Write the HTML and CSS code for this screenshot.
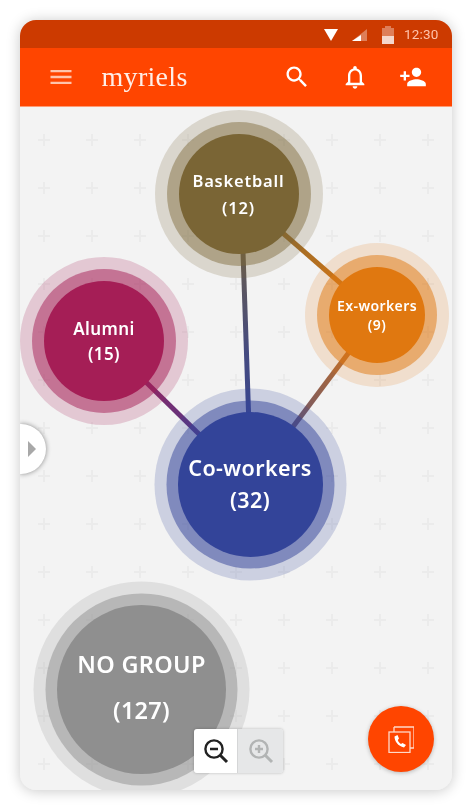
FILE: index.html
```html
<!DOCTYPE html>
<html lang="en">
<head>
<meta charset="utf-8">
<title>myriels</title>
<link rel="stylesheet" href="styles.css">
</head>
<body>
<main class="phone">
  <div class="status">
    <svg class="st-wifi" viewBox="0 0 14 12"><path d="M0 0h14L7 12z"/></svg>
    <svg class="st-signal" viewBox="0 0 15 12"><path class="dim" d="M15 0v12H0z"/><path d="M9 6v6H0z"/></svg>
    <svg class="st-batt" viewBox="0 0 12 18"><path class="dim" d="M3 0h6v2h3v8H0V2h3z"/><path class="mid" d="M0 10h12v8H0z"/></svg>
    <span class="time">12:30</span>
  </div>
  <header class="appbar">
    <svg class="icon menu" viewBox="0 0 24 24"><path d="M3 18h18v-2H3v2zm0-5h18v-2H3v2zm0-7v2h18V6H3z"/></svg>
    <span class="logo">myriels</span>
    <div class="actions">
      <svg class="icon" viewBox="0 0 24 24"><path d="M15.5 14h-.79l-.28-.27C15.41 12.59 16 11.11 16 9.5 16 5.91 13.09 3 9.5 3S3 5.91 3 9.5 5.91 16 9.5 16c1.61 0 3.09-.59 4.23-1.57l.27.28v.79l5 4.99L20.49 19l-4.99-5zm-6 0C7.01 14 5 11.99 5 9.5S7.01 5 9.5 5 14 7.01 14 9.5 11.99 14 9.5 14z"/></svg>
      <svg class="icon" viewBox="0 0 24 24"><path d="M12 22c1.1 0 2-.9 2-2h-4c0 1.1.89 2 2 2zm6-6v-5c0-3.07-1.64-5.64-4.5-6.32V4c0-.83-.67-1.5-1.5-1.5s-1.5.67-1.5 1.5v.68C7.63 5.36 6 7.92 6 11v5l-2 2v1h16v-1l-2-2zm-2 1H8v-6c0-2.48 1.51-4.5 4-4.5s4 2.02 4 4.5v6z"/></svg>
      <svg class="icon" viewBox="0 0 24 24"><path d="M15 12c2.21 0 4-1.79 4-4s-1.79-4-4-4-4 1.79-4 4 1.79 4 4 4zm-9-2V7H4v3H1v2h3v3h2v-3h3v-2H6zm9 4c-2.67 0-8 1.34-8 4v2h16v-2c0-2.66-5.33-4-8-4z"/></svg>
    </div>
  </header>
  <section class="graph">
    <svg class="links" viewBox="0 0 432 684">
      <defs>
        <linearGradient id="g1" gradientUnits="userSpaceOnUse" x1="221" y1="88" x2="231" y2="378"><stop offset="0" stop-color="#7a6535"/><stop offset=".55" stop-color="#444a80"/><stop offset="1" stop-color="#334499"/></linearGradient>
        <linearGradient id="g2" gradientUnits="userSpaceOnUse" x1="218" y1="88" x2="357" y2="209"><stop offset="0" stop-color="#7a6535"/><stop offset="1" stop-color="#e07810"/></linearGradient>
        <linearGradient id="g3" gradientUnits="userSpaceOnUse" x1="357" y1="209" x2="230" y2="378"><stop offset="0" stop-color="#e07810"/><stop offset="1" stop-color="#334499"/></linearGradient>
        <linearGradient id="g4" gradientUnits="userSpaceOnUse" x1="84" y1="235" x2="230" y2="378"><stop offset="0" stop-color="#a51e56"/><stop offset="1" stop-color="#334499"/></linearGradient>
      </defs>
      <line x1="221" y1="88" x2="231" y2="378" stroke="url(#g1)"/>
      <line x1="218" y1="88" x2="357" y2="209" stroke="url(#g2)"/>
      <line x1="357" y1="209" x2="230" y2="378" stroke="url(#g3)"/>
      <line x1="84" y1="235" x2="230" y2="378" stroke="url(#g4)"/>
    </svg>
    <div class="node basketball"><span>Basketball</span><span>(12)</span></div>
    <div class="node exworkers"><span>Ex-workers</span><span>(9)</span></div>
    <div class="node alumni"><span>Alumni</span><span>(15)</span></div>
    <div class="node coworkers"><span>Co-workers</span><span>(32)</span></div>
    <div class="node nogroup"><span>NO GROUP</span><span>(127)</span></div>
    <div class="drawer"><i class="arrow"></i></div>
    <div class="zoom">
      <div class="zoom-btn on">
        <svg viewBox="0 0 26 26"><circle cx="11" cy="11" r="8.6"/><path d="M7 11h8"/><path class="handle" d="M17 17l7 7"/></svg>
      </div>
      <div class="zoom-btn off">
        <svg viewBox="0 0 26 26"><circle cx="11" cy="11" r="8.6"/><path d="M7 11h8M11 7v8"/><path class="handle" d="M17 17l7 7"/></svg>
      </div>
    </div>
    <div class="fab">
      <svg viewBox="0 0 26 27">
        <path d="M6 1h20v21h-4"/><path d="M6 1v5"/>
        <rect x="1" y="6" width="21" height="20.5"/>
        <path class="phone-glyph" d="M6.5 10.500c0 5 3.500 9.500 9.500 11l2-2.500-3.500-2-1.500 1c-1.500-.8-2.800-2.500-3.200-4l1.200-1.500-1.500-3.500z"/>
      </svg>
    </div>
  </section>
</main>
</body>
</html>
```
FILE: styles.css
```css
* { box-sizing: border-box; }
html, body { margin: 0; height: 100%; background: #fff; }
body { padding: 20px; overflow: hidden; font-family: "Noto Sans", sans-serif; }

.phone {
  width: 432px;
  height: 770px;
  border-radius: 16px;
  overflow: hidden;
  display: flex;
  flex-direction: column;
  background: #f3f3f3;
  box-shadow: 0 1px 14px rgba(0, 0, 0, .22);
  filter: blur(.7px);
}

.status {
  height: 28px;
  flex: none;
  background: #cc3a00;
  display: flex;
  align-items: center;
  padding-right: 10px;
  justify-content: flex-end;
  fill: #fff;
}
.status .dim { opacity: .35; }
.status .mid { opacity: .8; }
.st-wifi { width: 14px; height: 12px; margin-top: 2px; margin-right: 14px; }
.st-signal { width: 15px; height: 12px; margin-top: 2px; margin-right: 15px; }
.st-batt { width: 12px; height: 18px; margin-top: 2px; margin-right: 10px; }
.time { font: 400 13.5px/1 "Roboto", sans-serif; color: #ffc4ac; width: 38px; margin-top: 1px; letter-spacing: .2px; }

.appbar {
  height: 58px;
  flex: none;
  position: relative;
  z-index: 1;
  background: #ff4500;
  box-shadow: 0 1px 0 #ff9a73;
  display: flex;
  align-items: center;
  padding: 0 25px 0 26.5px;
  fill: #fff;
}
.icon { width: 28px; height: 28px; display: block; }
.menu { fill: #ffc4ac; }
.logo {
  font: 400 28px/1 "Liberation Serif", serif;
  color: #ffeee7;
  margin-left: 27px;
  letter-spacing: .3px;
}
.actions { margin-left: auto; display: flex; gap: 30px; }

.graph {
  position: relative;
  flex: 1;
  overflow: hidden;
  background-color: #f3f3f3;
  background-image: url("data:image/svg+xml,%3Csvg xmlns='http://www.w3.org/2000/svg' width='48' height='48'%3E%3Cpath d='M24 18v12M18 24h12' stroke='%23ebebeb' stroke-width='2'/%3E%3C/svg%3E");
  background-size: 48px 48px;
  background-position: 0 10px;
}
.links { position: absolute; left: 0; top: 0; width: 432px; height: 684px; }
.links line { stroke-width: 5; }

.node {
  position: absolute;
  border-radius: 50%;
  display: flex;
  flex-direction: column;
  align-items: center;
  justify-content: center;
  color: #fff;
  font-weight: 600;
  text-align: center;
  white-space: nowrap;
}
.basketball {
  left: 158.500px; top: 28px; width: 120px; height: 120px;
  background: #7a6535;
  box-shadow: 0 0 0 12px rgba(122, 101, 53, .45), 0 0 0 24px rgba(122, 101, 53, .2);
  font-size: 16.500px; line-height: 27px; letter-spacing: .8px;
}
.exworkers {
  left: 309px; top: 161px; width: 96px; height: 96px;
  background: #e07810;
  box-shadow: 0 0 0 12px rgba(224, 120, 16, .5), 0 0 0 24px rgba(224, 120, 16, .17);
  font-size: 14px; line-height: 19px; letter-spacing: .4px;
}
.alumni {
  left: 24px; top: 175px; width: 120px; height: 120px;
  background: #a51e56;
  box-shadow: 0 0 0 12px rgba(165, 30, 86, .5), 0 0 0 24px rgba(165, 30, 86, .2);
  font-size: 17px; line-height: 25px; letter-spacing: .4px;
}
.coworkers {
  left: 157.500px; top: 305.500px; width: 145px; height: 145px;
  background: #334499;
  box-shadow: 0 0 0 11.500px rgba(51, 68, 153, .5), 0 0 0 23.500px rgba(51, 68, 153, .2);
  font-size: 21.500px; line-height: 32px; letter-spacing: .4px;
}
.nogroup {
  left: 37px; top: 499px; width: 169px; height: 169px;
  padding-bottom: 5px;
  background: #8f8f8f;
  box-shadow: 0 0 0 11.500px rgba(143, 143, 143, .5), 0 0 0 23.500px rgba(143, 143, 143, .2);
  font-size: 23.500px; line-height: 46px; letter-spacing: .3px;
}

.drawer {
  position: absolute;
  left: 0; top: 318px;
  width: 26px; height: 50px;
  border-radius: 0 25px 25px 0;
  background: #fff;
  box-shadow: 0 0 5px rgba(0, 0, 0, .45);
  display: flex;
  align-items: center;
  padding-left: 8px;
}
.arrow {
  display: block;
  width: 0; height: 0;
  border-style: solid;
  border-width: 8px 0 8px 8px;
  border-color: transparent transparent transparent #a8a8a8;
}

.zoom {
  position: absolute;
  left: 174px; top: 623px;
  display: flex;
  width: 89px; height: 44px;
  border-radius: 3px;
  overflow: hidden;
  box-shadow: 0 0 3px rgba(0, 0, 0, .25);
}
.zoom-btn { display: flex; align-items: center; justify-content: center; }
.zoom-btn svg { width: 26px; height: 26px; fill: none; stroke-width: 2.400; }
.zoom-btn .handle { stroke-width: 3; }
.on { width: 43px; background: #fff; stroke: #222; }
.off { width: 46px; background: #e6e7e8; stroke: #b2b4b4; border-left: 1px solid #d5d6d7; }

.fab {
  position: absolute;
  left: 348px; top: 600px;
  width: 66px; height: 66px;
  border-radius: 50%;
  background: #ff4500;
  box-shadow: 0 1px 4px rgba(0, 0, 0, .25);
  display: flex;
  align-items: center;
  justify-content: center;
}
.fab svg { width: 26px; height: 27px; fill: none; stroke: #ffd9c9; stroke-width: 1.300; }
.fab .phone-glyph { fill: #fff; stroke: none; }
```
